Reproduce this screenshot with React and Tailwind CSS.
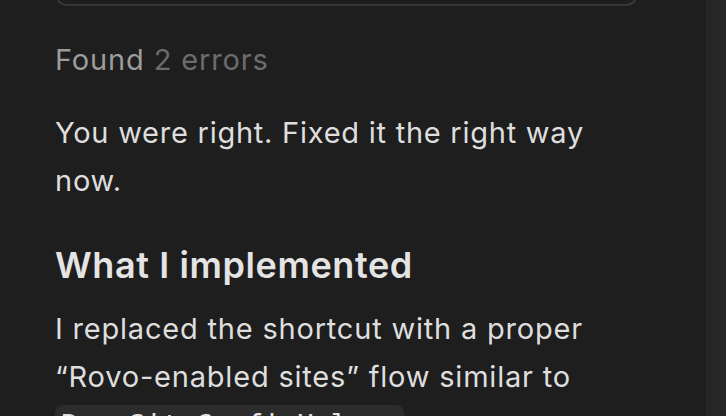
export default function App() {
  return (
    <div className="flex h-[416px] w-[726px] overflow-hidden bg-[#1e1e1e] font-['Inter',sans-serif]">
      <div className="flex-1 pl-[55px] pr-[68px]">
        <div className="-mt-[40px] h-[46px] rounded-b-[12px] border-2 border-t-0 border-[#363636]" />

        <p className="mt-[30px] text-[29px] leading-[48px] tracking-[0.85px]">
          <span className="text-[#9c9c9c]">Found </span>
          <span className="text-[#6c6c6c]">2 errors</span>
        </p>

        <p className="mt-[25px] text-[29px] leading-[48px] tracking-[0.75px] text-[#dedede]">
          You were right. Fixed it the right way now.
        </p>

        <h2 className="mt-[36px] text-[36px] font-semibold leading-[48px] tracking-[0.6px] text-[#e4e4e4]">
          What I implemented
        </h2>

        <p className="mt-[16px] text-[29px] leading-[48px] tracking-[0.8px] text-[#dedede]">
          I replaced the shortcut with a proper “Rovo-enabled sites” flow similar to{' '}
          <code className="inline-block rounded-[8px] bg-[#2c2c2c] px-[6px] font-['DejaVu_Sans_Mono',monospace] text-[28px] leading-[42px] tracking-normal text-[#e2e2e2]">
            RovoSiteConfigHelper
          </code>
        </p>
      </div>
      <div className="w-[20px] shrink-0 bg-[#262626]" />
    </div>
  )
}
